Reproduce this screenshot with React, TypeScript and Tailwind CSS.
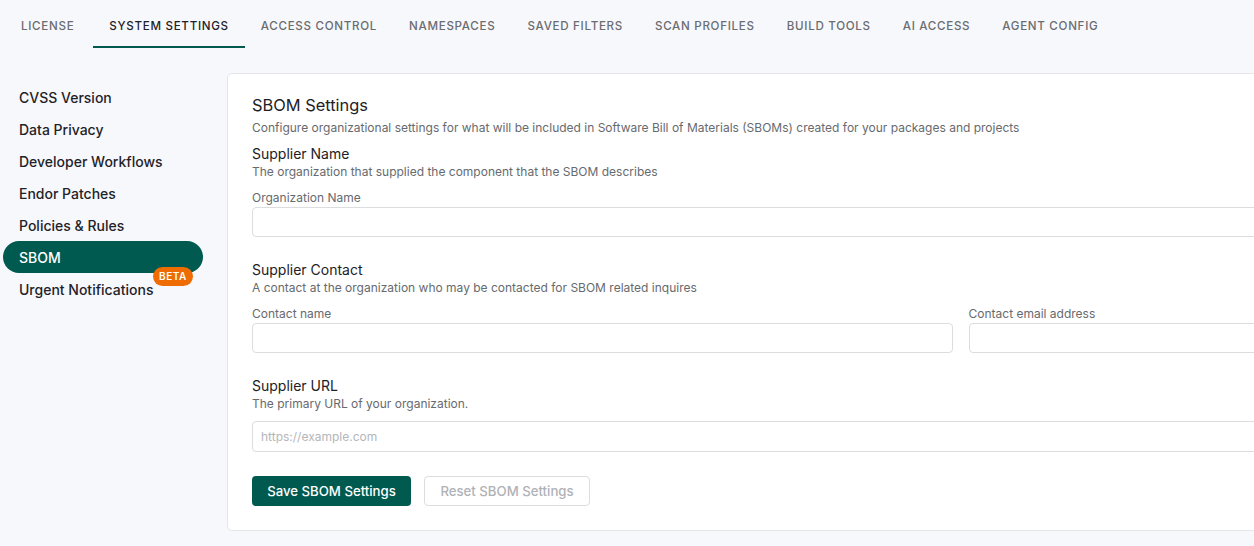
import React from "react";

const tabs = [
  "LICENSE",
  "SYSTEM SETTINGS",
  "ACCESS CONTROL",
  "NAMESPACES",
  "SAVED FILTERS",
  "SCAN PROFILES",
  "BUILD TOOLS",
  "AI ACCESS",
  "AGENT CONFIG",
];

const sideItems = [
  "CVSS Version",
  "Data Privacy",
  "Developer Workflows",
  "Endor Patches",
  "Policies & Rules",
  "SBOM",
  "Urgent Notifications",
];

export default function App() {
  return (
    <div
      className="w-full h-[546px] overflow-hidden bg-[#f7f8fc] text-[#1d2125]"
      style={{ fontFamily: "Inter, 'Noto Sans', sans-serif" }}
    >
      <div className="flex pl-[5px]">
        {tabs.map((t, i) => (
          <div
            key={t}
            className={
              "px-4 pt-[18px] pb-[12px] text-[11.6px] leading-4 tracking-[0.06em] font-medium border-b-2 " +
              (i === 0 ? "pr-[19px] " : "") +
              (i === 1
                ? "border-[#005a50] text-[#1f2328]"
                : "border-transparent text-[#6a6c70]")
            }
          >
            {t}
          </div>
        ))}
      </div>

      <div className="flex pl-[3px] pt-[25px]">
        <div className="w-[200px] shrink-0 mr-6 pt-2 flex flex-col">
          {sideItems.map((s) => (
            <div
              key={s}
              className={
                "relative h-8 flex items-center px-4 text-[14px] font-medium rounded-full " +
                (s === "SBOM" ? "bg-[#005a50] text-white" : "text-[#1f2328]")
              }
            >
              {s}
              {s === "Urgent Notifications" && (
                <span className="absolute right-[10px] top-[-6px] h-[19px] px-[6px] flex items-center rounded-full bg-[#ee6c02] text-white text-[10px] font-semibold tracking-[0.06em]">
                  BETA
                </span>
              )}
            </div>
          ))}
        </div>

        <div className="w-[1467px] shrink-0 bg-white border border-[#e4e6ea] rounded-[5px] px-6 pt-[17px] pb-6">
          <div className="text-[16.4px] leading-7 text-[#1d2125]">SBOM Settings</div>
          <div className="mt-px text-[12px] leading-4 text-[#676a6e]">
            Configure organizational settings for what will be included in Software Bill of Materials (SBOMs) created for your packages and projects
          </div>

          <div className="mt-2 text-[14px] leading-5 text-[#1d2125]">Supplier Name</div>
          <div className="text-[12px] leading-4 text-[#676a6e]">
            The organization that supplied the component that the SBOM describes
          </div>
          <div className="mt-[10px] text-[12px] leading-4 text-[#676a6e]">Organization Name</div>
          <div className="mt-px h-[30px] border border-[#dcdde0] rounded-[4px] bg-white" />

          <div className="mt-[23px] text-[14px] leading-5 text-[#1d2125]">Supplier Contact</div>
          <div className="text-[12px] leading-4 text-[#676a6e]">
            A contact at the organization who may be contacted for SBOM related inquires
          </div>
          <div className="mt-[10px] flex gap-4">
            <div className="flex-1">
              <div className="text-[12px] leading-4 text-[#676a6e]">Contact name</div>
              <div className="mt-px h-[30px] border border-[#dcdde0] rounded-[4px] bg-white" />
            </div>
            <div className="flex-1">
              <div className="text-[12px] leading-4 text-[#676a6e]">Contact email address</div>
              <div className="mt-px h-[30px] border border-[#dcdde0] rounded-[4px] bg-white" />
            </div>
          </div>

          <div className="mt-[23px] text-[14px] leading-5 text-[#1d2125]">Supplier URL</div>
          <div className="text-[12px] leading-4 text-[#676a6e]">The primary URL of your organization.</div>
          <div className="mt-[9px] h-[31px] border border-[#dcdde0] rounded-[4px] bg-white flex items-center px-2 text-[12px] text-[#b4b6ba]">
            https://example.com
          </div>

          <div className="mt-6 flex gap-[13px]">
            <div className="h-[30px] w-[159px] flex items-center justify-center pt-px rounded-[4px] bg-[#005a50] text-white text-[13.2px] font-medium">
              Save SBOM Settings
            </div>
            <div className="h-[30px] w-[166px] flex items-center justify-center pt-px rounded-[4px] border border-[#dcdde0] bg-white text-[#b0b2b6] text-[13.2px] font-medium">
              Reset SBOM Settings
            </div>
          </div>
        </div>
      </div>
    </div>
  );
}
